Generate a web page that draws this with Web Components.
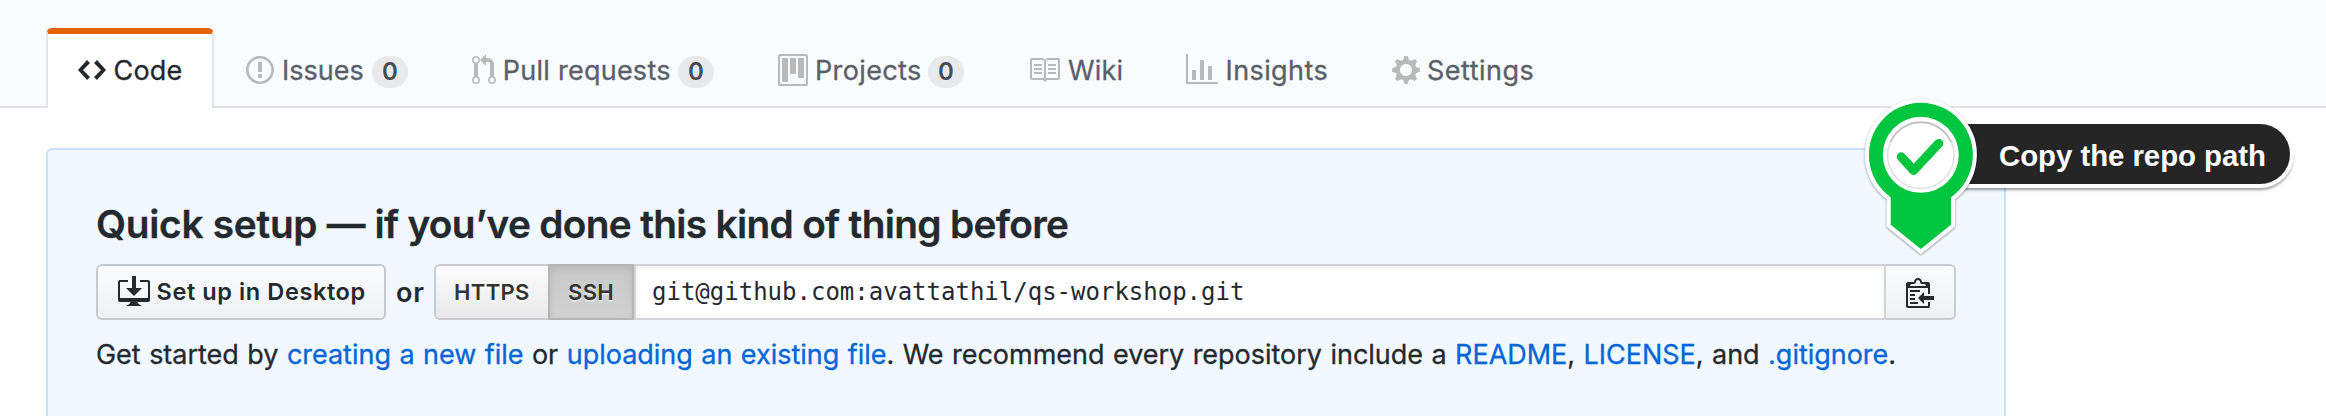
<!DOCTYPE html>
<html lang="en">
<head>
<meta charset="utf-8">
<title>Quick setup</title>
<style>
html, body { margin: 0; background: #fff; }
body { height: 416px; overflow: hidden; font-family: Inter, "Open Sans", sans-serif; color: #24292e; }
</style>
</head>
<body>
<repo-page></repo-page>
<script>
const ICONS = {
  code: [14, 'M9.5 3L8 4.5 11.5 8 8 11.5 9.5 13 14 8 9.5 3zm-5 0L0 8l4.5 5L6 11.5 2.5 8 6 4.5 4.5 3z'],
  issue: [14, 'M7 2.3c3.14 0 5.7 2.56 5.7 5.7s-2.56 5.7-5.7 5.7A5.71 5.71 0 0 1 1.3 8c0-3.14 2.56-5.7 5.7-5.7zM7 1C3.14 1 0 4.14 0 8s3.14 7 7 7 7-3.14 7-7-3.14-7-7-7zm1 3H6v5h2V4zm0 6H6v2h2v-2z'],
  pull: [12, 'M11 11.28V5c-.03-.78-.34-1.47-.94-2.06C9.46 2.35 8.78 2.03 8 2H7V0L4 3l3 3V4h1c.27.02.48.11.69.31.21.2.3.42.31.69v6.28A1.993 1.993 0 0 0 10 15a1.993 1.993 0 0 0 1-3.72zm-1 2.92c-.66 0-1.2-.55-1.2-1.2 0-.65.55-1.2 1.2-1.2.65 0 1.2.55 1.2 1.2 0 .65-.55 1.2-1.2 1.2zM4 3c0-1.11-.89-2-2-2a1.993 1.993 0 0 0-1 3.72v6.56A1.993 1.993 0 0 0 2 15a1.993 1.993 0 0 0 1-3.72V4.72c.59-.34 1-.98 1-1.72zm-.8 10c0 .66-.55 1.2-1.2 1.2-.65 0-1.2-.55-1.2-1.2 0-.65.55-1.2 1.2-1.2.65 0 1.2.55 1.2 1.2zM2 4.2C1.34 4.2.8 3.65.8 3c0-.65.55-1.2 1.2-1.2.65 0 1.2.55 1.2 1.2 0 .65-.55 1.2-1.2 1.2z'],
  project: [15, 'M10 12h3V2h-3v10zm-4-2h3V2H6v8zm-4 4h3V2H2v12zm-1 1h13V1H1v14zM14 0H1a1 1 0 0 0-1 1v14a1 1 0 0 0 1 1h13a1 1 0 0 0 1-1V1a1 1 0 0 0-1-1z'],
  book: [16, 'M3 5h4v1H3V5zm0 3h4V7H3v1zm0 2h4V9H3v1zm11-5h-4v1h4V5zm0 2h-4v1h4V7zm0 2h-4v1h4V9zm2-6v9c0 .55-.45 1-1 1H9.5l-1 1-1-1H2c-.55 0-1-.45-1-1V3c0-.55.45-1 1-1h5.5l1 1 1-1H15c.55 0 1 .45 1 1zm-8 .5L7.5 3H2v9h6V3.5zm7-.5H9.5l-.5.5V12h6V3z'],
  graph: [16, 'M16 14v1H0V0h1v14h15zM5 13H3V8h2v5zm4 0H7V3h2v10zm4 0h-2V6h2v7z'],
  gear: [14, 'M14 8.77v-1.6l-1.94-.64-.45-1.09.88-1.84-1.13-1.13-1.81.91-1.09-.45-.69-1.92h-1.6l-.63 1.94-1.11.45-1.84-.88-1.13 1.13.91 1.81-.45 1.09L0 7.23v1.59l1.94.64.45 1.09-.88 1.84 1.13 1.13 1.81-.91 1.09.45.69 1.92h1.59l.63-1.94 1.11-.45 1.84.88 1.13-1.13-.92-1.81.47-1.09L14 8.75v.02zM7 11c-1.66 0-3-1.34-3-3s1.34-3 3-3 3 1.34 3 3-1.34 3-3 3z'],
  desktop: [16, 'M4 6h3V0h2v6h3l-4 4-4-4zm11-4h-4v1h4v8H1V3h4V2H1c-.55 0-1 .45-1 1v9c0 .55.45 1 1 1h5.34c-.25.61-.86 1.39-2.34 2h8c-1.48-.61-2.09-1.39-2.34-2H15c.55 0 1-.45 1-1V3c0-.55-.45-1-1-1z'],
  clippy: [14, 'M2 13h4v1H2v-1zm5-6H2v1h5V7zm2 3V8l-3 3 3 3v-2h5v-2H9zM4.5 9H2v1h2.5V9zM2 12h2.5v-1H2v1zm9 1h1v2c-.02.28-.11.52-.3.7-.19.18-.42.28-.7.3H1c-.55 0-1-.45-1-1V4c0-.55.45-1 1-1h3c0-1.11.89-2 2-2 1.11 0 2 .89 2 2h3c.55 0 1 .45 1 1v5h-1V6H1v9h10v-2zM2 5h8c0-.55-.45-1-1-1H8c-.55 0-1-.45-1-1s-.45-1-1-1-1 .45-1 1-.45 1-1 1H3c-.55 0-1 .45-1 1z']
};

function define(name, html) {
  customElements.define(name, class extends HTMLElement {
    connectedCallback() {
      if (this.shadowRoot) return;
      this.attachShadow({ mode: 'open' }).innerHTML = typeof html === 'function' ? html(this) : html;
    }
  });
}

define('oct-icon', el => {
  const [w, d] = ICONS[el.getAttribute('name')];
  return `<style>:host{display:block;flex:none;width:${w * 2}px;height:32px}svg{display:block;fill:currentColor}</style>
  <svg width="${w * 2}" height="32" viewBox="0 0 ${w} 16"><path fill-rule="evenodd" d="${d}"/></svg>`;
});

define('nav-tab', el => `
<style>
:host { display: flex; align-items: center; box-sizing: border-box; height: 80px; padding: 6px 30px 2px;
  border: 0 solid transparent; border-width: 0 2px; font-size: 27px; line-height: 40px; white-space: nowrap; color: #586069; }
:host([selected]) { color: #24292e; background: #fff; border: 2px solid #e1e4e8; border-top: 6px solid #e36209;
  border-bottom: 0; border-radius: 6px 6px 0 0; padding: 0 30px 2px; }
oct-icon { color: #b9b9b9; margin-right: var(--gap, 7px); }
:host([selected]) oct-icon { color: #24292e; }
.name { padding-top: 2px; -webkit-text-stroke: .3px; }
.count { margin: 4px 0 0 auto; width: 36px; height: 32px; border-radius: 16px; background: rgba(27,31,35,.08);
  color: #444d56; font-size: 24px; font-weight: 600; line-height: 32px; text-align: center; letter-spacing: 0; }
</style>
<oct-icon name="${el.getAttribute('icon')}"></oct-icon><span class="name"><slot></slot></span>
${el.hasAttribute('count') ? `<span class="count">${el.getAttribute('count')}</span>` : ''}`);

define('repo-nav', `
<style>
:host { display: flex; height: 108px; box-sizing: border-box; padding: 28px 0 0 46px;
  background: linear-gradient(#e1e4e8, #e1e4e8) 0 100% / 100% 2px no-repeat #fafbfc; }
</style>
<nav-tab selected icon="code" style="width:168px;letter-spacing:.18px;--gap:7.6px">Code</nav-tab>
<nav-tab icon="issue" count="0" style="width:226px;--gap:8px">Issues</nav-tab>
<nav-tab icon="pull" count="0" style="width:306px;letter-spacing:.25px;--gap:6.8px">Pull requests</nav-tab>
<nav-tab icon="project" count="0" style="width:250px;letter-spacing:.37px;--gap:7px">Projects</nav-tab>
<nav-tab icon="book" style="width:158px;letter-spacing:.2px;--gap:8px">Wiki</nav-tab>
<nav-tab icon="graph" style="width:206px;letter-spacing:.4px;--gap:7.5px">Insights</nav-tab>
<nav-tab icon="gear" style="letter-spacing:.5px">Settings</nav-tab>`);

define('desktop-button', `
<style>
:host { display: flex; align-items: center; box-sizing: border-box; width: 290px; height: 56px; padding-left: 20px;
  border: 2px solid #c5cacf; border-radius: 6px; background: linear-gradient(#fafbfc, #eff3f6 90%);
  font-size: 23.5px; font-weight: 600; letter-spacing: .6px; white-space: nowrap; }
oct-icon { margin-right: 6.5px; }
span { padding-bottom: 2px; }
</style>
<oct-icon name="desktop"></oct-icon><span><slot></slot></span>`);

define('clone-url', `
<style>
:host { display: flex; height: 56px; width: 1522px; }
div { box-sizing: border-box; height: 56px; display: flex; align-items: center; }
.proto { font-size: 22px; font-weight: 600; letter-spacing: .35px; color: #333; text-shadow: 0 2px 0 rgba(255,255,255,.9); }
.https { width: 114px; padding-left: 18px; border: 2px solid #c8cccf; border-right: 0; border-radius: 6px 0 0 6px;
  background: linear-gradient(#fcfcfc, #e9e9e9); }
.ssh { width: 86px; padding-left: 18px; border: 2px solid #b5b5b5; background: linear-gradient(#c9c9c9, #d2d2d2);
  box-shadow: inset 0 3px 8px rgba(0,0,0,.09); text-shadow: 0 2px 0 rgba(255,255,255,.5); }
.url { flex: 1; padding-left: 16px; border: 2px solid #d1d5da; background: #fff;
  box-shadow: inset 0 2px 4px rgba(27,31,35,.075); font: 24px "DejaVu Sans Mono", monospace; }
.copy { width: 70px; padding-left: 20px; border: 2px solid #c9ccd0; border-left: 0; border-radius: 0 6px 6px 0;
  background: linear-gradient(#fafbfc, #eff1f4); }
</style>
<div class="proto https">HTTPS</div><div class="proto ssh">SSH</div>
<div class="url">git@github.com:avattathil/qs-workshop.git</div>
<div class="copy"><oct-icon name="clippy"></oct-icon></div>`);

define('setup-panel', `
<style>
:host { display: block; box-sizing: border-box; width: 1960px; height: 300px; margin: 40px 0 0 46px; padding: 44px 48px;
  border: 2px solid #c8e1ff; border-radius: 6px; background: #f1f8ff; }
h3 { margin: 0; font-size: 38.8px; font-weight: 600; line-height: 60px; letter-spacing: -.676px; white-space: nowrap; -webkit-text-stroke: .3px; }
h3 span { letter-spacing: -.27px; }
.row { display: flex; align-items: center; margin-top: 10px; width: 1860px; }
.or { width: 38px; margin-left: 10px; font-size: 27px; font-weight: 600; letter-spacing: .8px; }
p { margin: 15px 0 0; font-size: 27px; line-height: 40px; letter-spacing: -.02px; word-spacing: .9px; white-space: nowrap; -webkit-text-stroke: .3px; }
a { color: #0366d6; }
</style>
<h3><span>Quick setup —</span> if you’ve done this kind of thing before</h3>
<div class="row"><desktop-button>Set up in Desktop</desktop-button><span class="or">or</span><clone-url></clone-url></div>
<p>Get started by <a>creating a new file</a> or <a>uploading an existing file</a>. We recommend every repository include a <a>README</a>, <a>LICENSE</a>, and <a>.gitignore</a>.</p>`);

define('step-callout', `
<style>
:host { display: block; position: absolute; left: 1860px; top: 94px; width: 440px; height: 170px; }
.label { position: absolute; left: 60px; top: 30px; width: 370px; height: 60px; box-sizing: border-box; padding-left: 79px;
  border-radius: 0 30px 30px 0; background: rgba(28,28,28,.96); box-shadow: 0 0 0 4px #fff, 0 3px 3px 3px rgba(0,0,0,.4);
  color: #fff; font: bold 29.4px/64px "Liberation Sans", sans-serif; letter-spacing: -.05px; white-space: nowrap; }
svg { position: absolute; left: 0; top: 0; overflow: visible; filter: drop-shadow(0 1.5px 1.2px rgba(0,0,0,.4)); }
</style>
<div class="label"><slot></slot></div>
<svg width="122" height="170" viewBox="1860 94 122 170">
  <path id="pin" d="M1890.7 197.2A52 52 0 1 1 1951 197.2V224.8L1920.8 249L1890.7 224.8Z" fill="#00c63f" stroke="#fff" stroke-width="8" paint-order="stroke"/>
  <circle cx="1920.8" cy="154.8" r="38" fill="#fff"/>
  <circle cx="1920.8" cy="155.3" r="33.2" fill="none" stroke="#bbb" stroke-width="1.6" opacity=".45"/>
  <path d="M1890.5 142A33.2 33.2 0 0 1 1951.1 142" fill="none" stroke="#aaa" stroke-width="1.6" opacity=".6"/>
  <path d="M1901.2 156.8L1913.6 170.4L1938.8 143.4" fill="none" stroke="#00c63f" stroke-width="9" stroke-linecap="round" stroke-linejoin="round"/>
</svg>`);

define('repo-page', `
<style>:host { display: block; position: relative; width: 2326px; height: 416px; overflow: hidden; }</style>
<repo-nav></repo-nav>
<setup-panel></setup-panel>
<step-callout>Copy the repo path</step-callout>`);
</script>
</body>
</html>
